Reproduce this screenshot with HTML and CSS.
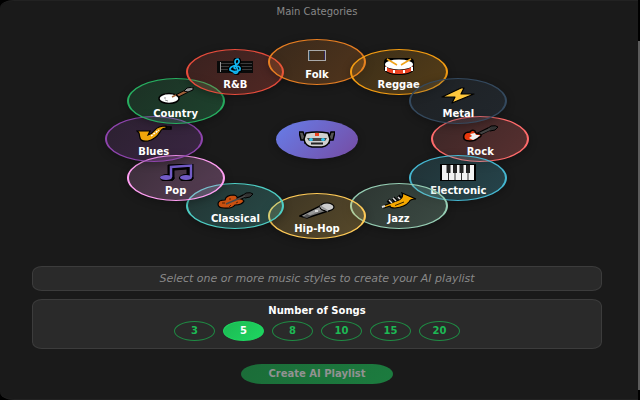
FILE: index.html
```
<!DOCTYPE html>
<html lang="en">
<head>
  <meta charset="UTF-8">
  <meta name="viewport" content="width=device-width, initial-scale=1.0">
  <title>AI Playlist</title>
  <link rel="stylesheet" href="styles.css">
</head>
<body>

  <main class="modal">
    <h2 class="modal-title">Main Categories</h2>

    <!-- Genre wheel -->
    <div class="wheel">
      <button type="button" class="genre rock">
        <svg class="icon" viewBox="0 0 36 17">
          <path d="M15 10L27 4" stroke="#000" stroke-width="4"/>
          <path d="M25 4L29 1Q34 0 36 2L33 5L28 6Z" fill="#333" stroke="#000"/>
          <path d="M15 10L28 4" stroke="#444" stroke-width="2"/>
          <path d="M2 10Q3 7 8 7Q10 4 13 6Q13 9 18 9Q21 11 16 13Q13 16 8 16Q0 16 2 10Z" fill="#e8380d" stroke="#000" stroke-width="1.5"/>
          <path d="M8 9L13 8L14 10L18 10L15 13L11 15L7 13L10 11Z" fill="#eee"/>
        </svg>
        <span>Rock</span>
      </button>
      <button type="button" class="genre electronic">
        <svg class="icon" viewBox="0 0 36 17">
          <rect x="0" y="0" width="36" height="17" fill="#000"/>
          <rect x="2" y="1" width="32" height="15" fill="#f2f2f2"/>
          <path d="M8.5 1V16M15 1V16M21.5 1V16M28 1V16" stroke="#333" stroke-width="1"/>
          <path d="M8.5 1V9M15 1V9M21.5 1V9M28 1V9" stroke="#222" stroke-width="4"/>
        </svg>
        <span>Electronic</span>
      </button>
      <button type="button" class="genre jazz">
        <svg class="icon" viewBox="0 0 36 17">
          <path d="M7 8L11 12M12 6L16 10M17 4L21 8" stroke="#000" stroke-width="4"/>
          <path d="M2 14L18 8Q23 5 21 1L35 7Q29 7 28 10Q24 15 14 16Q9 16 9 14L3 16Z" fill="#f5a800" stroke="#000" stroke-width="1.2"/>
          <path d="M14 13.500L23 10" fill="none" stroke="#000" stroke-width=".8"/>
          <path d="M8 8L11 11M12 6L15 9M17 5L19 7" stroke="#ddd" stroke-width="1.5"/>
          <path d="M1 15L4 14" stroke="#ddd" stroke-width="2"/>
        </svg>
        <span>Jazz</span>
      </button>
      <button type="button" class="genre hiphop">
        <svg class="icon" viewBox="0 0 36 17">
          <path d="M1 14L21 4L29 9L8 16Z" fill="#777" stroke="#000" stroke-width="1.5"/>
          <path d="M3 14L21 5L25 7L7 15Z" fill="#999"/>
          <path d="M4 15L8 12L12 14L8 16Z" fill="#555"/>
          <ellipse cx="28" cy="5" rx="7" ry="4" fill="#ccc" stroke="#000" stroke-width="1.2"/>
          <path d="M21 4L29 9" stroke="#999" stroke-width="1.5"/>
          <path d="M16 9H19" stroke="#eee" stroke-width="1.5"/>
        </svg>
        <span>Hip-Hop</span>
      </button>
      <button type="button" class="genre classical">
        <svg class="icon" viewBox="0 0 36 17">
          <path d="M15 10L27 4" stroke="#000" stroke-width="4"/>
          <path d="M25 4L29 1Q34 0 36 2L33 5L28 6Z" fill="#333" stroke="#000"/>
          <path d="M1 12Q1 8 8 8Q9 3 17 3Q21 4 20 7Q25 6 27 9Q25 13 18 13Q15 17 7 16Q1 16 1 12Z" fill="#ca5010" stroke="#000" stroke-width="1.2"/>
          <path d="M9 12L28 4" stroke="#4a4a4a" stroke-width="1.5"/>
          <path d="M5 11L8 11M12 15L14 13M12 7L14 7M19 11L21 10" stroke="#3a1500" stroke-width=".8"/>
        </svg>
        <span>Classical</span>
      </button>
      <button type="button" class="genre pop">
        <svg class="icon" viewBox="0 0 36 17">
          <path d="M10 12V1L35 0V13A7 3.5 0 1 1 29 10.5V5L16 6V13A7 3.5 0 1 1 10 10.5Z" fill="#000" stroke="#000"/>
          <path d="M13 13V3L33 1.5V13" fill="none" stroke="#725bc6" stroke-width="2.5"/>
          <ellipse cx="8" cy="13.5" rx="6" ry="2.6" fill="#725bc6"/>
          <ellipse cx="28" cy="13.5" rx="6" ry="2.6" fill="#725bc6"/>
        </svg>
        <span>Pop</span>
      </button>
      <button type="button" class="genre blues">
        <svg class="icon" viewBox="0 0 36 17">
          <path d="M26 2H35V4H27" fill="#333" stroke="#000" stroke-width="1.5"/>
          <path d="M1 6H14L12 10Q16 9 19 5Q22 1 30 1V3Q26 3 24 7Q20 14 12 16Q5 17 4 13L3 8Z" fill="#efa50a" stroke="#000" stroke-width="1.2"/>
          <path d="M15 11L23 5" stroke="#fff" stroke-width="1.5" stroke-dasharray="2 1"/>
        </svg>
        <span>Blues</span>
      </button>
      <button type="button" class="genre country">
        <svg class="icon" viewBox="0 0 36 17">
          <path d="M13 12L29 4" stroke="#000" stroke-width="4"/>
          <path d="M13 12L29 4" stroke="#a0613a" stroke-width="2"/>
          <path d="M26 4L29 1L35 0V3L30 5Z" fill="#999" stroke="#000"/>
          <ellipse cx="11" cy="11.5" rx="10" ry="5" fill="#fff" stroke="#000" stroke-width="1.5"/>
          <path d="M14 10L18 8" stroke="#a0613a" stroke-width="1.5"/>
          <path d="M6 11H8M7 13L10 14" stroke="#777" stroke-width=".8"/>
        </svg>
        <span>Country</span>
      </button>
      <button type="button" class="genre rnb">
        <svg class="icon" viewBox="0 0 36 17">
          <rect x="0" y="3" width="36" height="12" fill="#0a0a0a"/>
          <path d="M3 5.5H35M3 8.5H35M3 11.5H35" stroke="#3c3c3c" stroke-width="1"/>
          <path d="M3.5 4V14" stroke="#999"/>
          <path d="M17 14Q21 17 21 13L18 4Q18 1 21 1Q24 4 19 7Q12 9 13 12Q17 15 23 12Q24 8 19 8Q15 10 19 11" fill="none" stroke="#000" stroke-width="4"/>
          <path d="M16 14Q20 17 21 13L18 4Q18 1 21 1Q24 4 19 7Q12 9 13 12Q17 15 23 12Q24 8 19 8Q15 10 19 11" fill="none" stroke="#12b5ef" stroke-width="1.7"/>
        </svg>
        <span>R&amp;B</span>
      </button>
      <button type="button" class="genre folk">
        <svg class="icon" viewBox="0 0 36 17">
          <rect x="9.5" y="2.5" width="17" height="10" fill="none" stroke="#aaa"/>
          <path d="M10.5 3V12" stroke="#2c4a60"/>
          <path d="M25.5 3V12" stroke="#33255c"/>
        </svg>
        <span>Folk</span>
      </button>
      <button type="button" class="genre reggae">
        <svg class="icon" viewBox="0 0 36 17">
          <path d="M3 7Q2 0 7 0H29Q34 0 33 7V12Q30 17 18 17Q6 17 3 12Z" fill="#000"/>
          <path d="M4 8Q8 12 18 12Q28 12 32 8V12Q28 16 18 16Q8 16 4 12Z" fill="#ef4423"/>
          <path d="M4 9H6V13H4ZM12 12H14V15H12ZM22 12H24V15H22ZM30 9H32V13H30Z" fill="#fff"/>
          <ellipse cx="18" cy="6.5" rx="14" ry="5" fill="#fff"/>
          <path d="M6 1L16 7M30 1L20 7" stroke="#f0a31a" stroke-width="1.5"/>
        </svg>
        <span>Reggae</span>
      </button>
      <button type="button" class="genre metal">
        <svg class="icon" viewBox="0 0 36 17">
          <path d="M21 1L2 10L15 10L12 16L34 7L21 7L24 1Z" fill="#ffc83d" stroke="#000" stroke-width="1.2" stroke-linejoin="round"/>
        </svg>
        <span>Metal</span>
      </button>

      <button type="button" class="robot" aria-label="AI assistant">
        <svg class="icon" viewBox="0 0 36 17">
          <path d="M0 1H4L6 6H30L32 1H36L34 9H30V12H6V9H2Z" fill="#555" stroke="#000" stroke-width="1.5"/>
          <path d="M7 2Q18 0 29 2L31 8Q30 15 23 16H13Q6 15 5 8Z" fill="#d0d0d0" stroke="#000" stroke-width="1.5"/>
          <path d="M16 2H20V5H16Z" fill="#ed4221"/>
          <path d="M8 7H28L26 10H10Z" fill="#444"/>
          <ellipse cx="12" cy="8.5" rx="2" ry="1.5" fill="#2fc7f5"/>
          <ellipse cx="24" cy="8.5" rx="2" ry="1.5" fill="#2fc7f5"/>
          <path d="M12 12.5H24" stroke="#222" stroke-width="2"/>
        </svg>
      </button>
    </div>

    <p class="panel hint">Select one or more music styles to create your AI playlist</p>

    <section class="panel songs">
      <h3>Number of Songs</h3>
      <div class="counts">
        <button type="button" class="count">3</button>
        <button type="button" class="count active">5</button>
        <button type="button" class="count">8</button>
        <button type="button" class="count">10</button>
        <button type="button" class="count">15</button>
        <button type="button" class="count">20</button>
      </div>
    </section>

    <button type="submit" class="create-btn" disabled>Create AI Playlist</button>
  </main>

  <div class="scrollbar"><div class="thumb"></div></div>

</body>
</html>
```
FILE: styles.css
```
* { box-sizing: border-box; margin: 0; padding: 0; }

body {
  font-family: 'DejaVu Sans', Verdana, sans-serif;
  font-size: 10px;
  line-height: 12px;
  background: #000;
  color: #fff;
  min-height: 100vh;
  display: flex;
}

button { font: inherit; color: inherit; cursor: pointer; }

.modal {
  flex: 1;
  padding: 5px 36px 14px 32px;
  background: #1a1a1a;
  border-top: 1px solid #222;
  border-bottom: 1px solid #222;
  border-radius: 14px 0 0 14px / 8px 0 0 8px;
  display: flex;
  flex-direction: column;
  align-items: center;
}

.modal-title { font-size: 10px; font-weight: normal; color: #888; }

/* Genre wheel */
.wheel {
  position: relative;
  width: 424px;
  max-width: 100%;
  height: 200px;
  margin: 21px 0 27px;
}

.genre, .robot {
  position: absolute;
  border-radius: 50%;
  box-shadow: 0 2px 8px rgba(0, 0, 0, 0.3);
}

.genre {
  left: calc(50% + 38.5% * cos(var(--angle)));
  top: calc(50% + 38.5% * sin(var(--angle)));
  width: 98px;
  height: 46px;
  margin: -23px 0 0 -49px;
  padding-top: 8px;
  border: solid var(--color);
  border-width: 1px 2px;
  background: linear-gradient(135deg, color-mix(in srgb, var(--color) 15%, transparent), color-mix(in srgb, var(--color) 27%, transparent));
  font-weight: bold;
  display: flex;
  flex-direction: column;
  align-items: center;
  gap: 4px;
}

.icon { display: block; width: 36px; height: 17px; flex: none; }

.rock { --angle: 0deg; --color: #ff6b6b; }
.electronic { --angle: 30deg; --color: #45b7d1; }
.jazz { --angle: 60deg; --color: #96ceb4; }
.hiphop { --angle: 90deg; --color: #feca57; }
.classical { --angle: 120deg; --color: #4ecdc4; }
.pop { --angle: 150deg; --color: #ff9ff3; }
.blues { --angle: 180deg; --color: #8e44ad; }
.country { --angle: 210deg; --color: #27ae60; }
.rnb { --angle: 240deg; --color: #e74c3c; }
.folk { --angle: 270deg; --color: #e67e22; }
.reggae { --angle: 300deg; --color: #f39c12; }
.metal { --angle: 330deg; --color: #34495e; }

.robot {
  left: 50%;
  top: 50%;
  width: 82px;
  height: 39px;
  margin: -19px 0 0 -41px;
  border: none;
  background: linear-gradient(135deg, #667eea, #764ba2);
  display: flex;
  align-items: center;
  justify-content: center;
}

/* Panels */
.panel {
  width: 100%;
  background: #2a2a2a;
  border: 1px solid #3c3c3c;
  border-radius: 10px / 7px;
  text-align: center;
}

.hint {
  padding: 6px 10px 5px;
  margin-bottom: 8px;
  color: #888;
  font-size: 11px;
  font-style: italic;
}

.songs { padding: 5px 10px 7px; margin-bottom: 15px; }
.songs h3 { font-size: 10px; margin-bottom: 4px; }

.counts { display: flex; justify-content: center; gap: 8px; }

.count {
  width: 41px;
  height: 20px;
  border: 1px solid #1f8c44;
  border-radius: 50%;
  background: transparent;
  color: #1db954;
  font-weight: bold;
}

.count.active {
  border-color: #1ed760;
  background: linear-gradient(135deg, #1db954, #1ed760);
  color: #fff;
}

.create-btn {
  width: 152px;
  height: 20px;
  border: none;
  border-radius: 21px / 10px;
  background: linear-gradient(135deg, #1b6c38, #1c7c3f);
  color: #929292;
  font-weight: bold;
  cursor: default;
}

/* Scrollbar */
.scrollbar { width: 2px; padding: 41px 0 10px; display: flex; }
.thumb { flex: 1; background: #5c5c5c; }
```
